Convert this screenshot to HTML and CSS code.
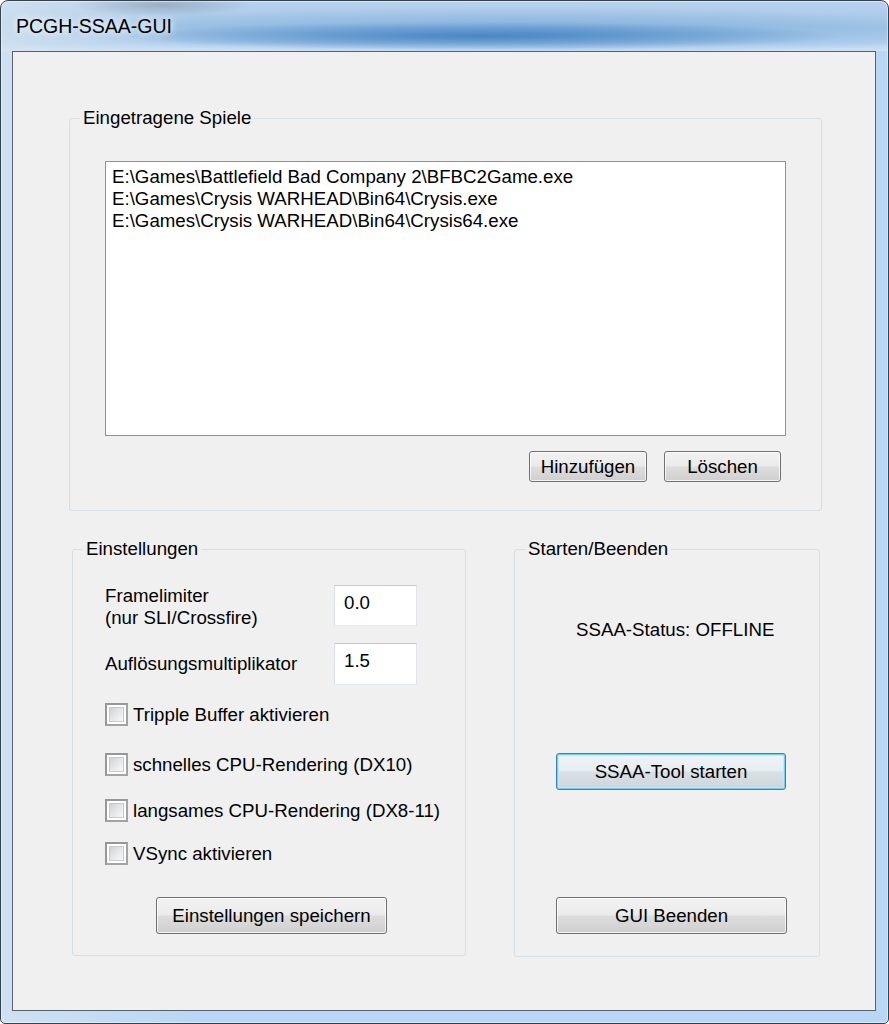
FILE: index.html
```html
<!DOCTYPE html>
<html lang="de">
<head>
<meta charset="utf-8">
<title>PCGH-SSAA-GUI</title>
<link rel="stylesheet" href="styles.css">
</head>
<body>
<div class="window">
  <div class="titlebar"><span class="title">PCGH-SSAA-GUI</span></div>
  <div class="client">
    <fieldset class="group games">
      <legend>Eingetragene Spiele</legend>
      <div class="games-body">
        <div class="listbox">
          <div class="item">E:\Games\Battlefield Bad Company 2\BFBC2Game.exe</div>
          <div class="item">E:\Games\Crysis WARHEAD\Bin64\Crysis.exe</div>
          <div class="item">E:\Games\Crysis WARHEAD\Bin64\Crysis64.exe</div>
        </div>
        <div class="btn-row">
          <button class="btn btn-add">Hinzufügen</button>
          <button class="btn btn-del">Löschen</button>
        </div>
      </div>
    </fieldset>

    <div class="lower">
      <fieldset class="group settings">
        <legend>Einstellungen</legend>
        <div class="settings-body">
          <div class="field-row row-frame">
            <div class="field-label">Framelimiter<br>(nur SLI/Crossfire)</div>
            <div class="textbox tb-frame">0.0</div>
          </div>
          <div class="field-row row-mult">
            <div class="field-label">Auflösungsmultiplikator</div>
            <div class="textbox tb-mult">1.5</div>
          </div>
          <div class="check cb1"><span class="check-box"></span><span class="check-text">Tripple Buffer aktivieren</span></div>
          <div class="check cb2"><span class="check-box"></span><span class="check-text">schnelles CPU-Rendering (DX10)</span></div>
          <div class="check cb3"><span class="check-box"></span><span class="check-text">langsames CPU-Rendering (DX8-11)</span></div>
          <div class="check cb4"><span class="check-box"></span><span class="check-text">VSync aktivieren</span></div>
          <button class="btn btn-save">Einstellungen speichern</button>
        </div>
      </fieldset>

      <fieldset class="group control">
        <legend>Starten/Beenden</legend>
        <div class="control-body">
          <div class="status">SSAA-Status: OFFLINE</div>
          <button class="btn btn-default btn-start">SSAA-Tool starten</button>
          <button class="btn btn-quit">GUI Beenden</button>
        </div>
      </fieldset>
    </div>
  </div>
</div>
</body>
</html>
```

FILE: styles.css
```css
html, body {
  margin: 0;
  padding: 0;
  background: #ffffff;
}

body {
  font-family: "Liberation Sans", Arial, sans-serif;
  font-size: 18.7px;
  color: #000;
}

.window {
  width: 889px;
  height: 1024px;
  box-sizing: border-box;
  border: 1px solid #34424f;
  border-radius: 8px 8px 5px 5px;
  padding: 0 12px 12px 11px;
  display: flex;
  flex-direction: column;
  background:
    radial-gradient(ellipse 360px 14px at 480px 35px, rgba(72, 134, 196, 1), rgba(72, 134, 196, 0)),
    radial-gradient(ellipse 460px 24px at 520px 30px, rgba(118, 168, 216, 0.8), rgba(118, 168, 216, 0)),
    radial-gradient(ellipse 90px 11px at 160px 4px, rgba(120, 132, 146, 0.45), rgba(120, 132, 146, 0)),
    linear-gradient(to right, rgba(214, 228, 240, 0.75) 0px, rgba(214, 228, 240, 0) 190px),
    linear-gradient(to bottom, #b8d2ec 0px, #a4c6e7 26px, #b3d0ed 42px, #cfe2f4 50px, #b9d7f4 50px, #b9d7f4 100%);
  box-shadow: inset 0 0 0 1px rgba(255, 255, 255, 0.45);
}

.titlebar {
  height: 50px;
  flex: none;
  padding-left: 4px;
  line-height: 51px;
}

.title {
  font-size: 19.5px;
  color: #000;
  text-shadow: 0 0 6px rgba(255, 255, 255, 0.9), 0 0 10px rgba(255, 255, 255, 0.7);
}

.client {
  flex: 1;
  border: 1px solid #56616d;
  background: #f0f0f0;
  display: flex;
  flex-direction: column;
}

/* group boxes */
.group {
  margin: 0;
  padding: 0;
  min-width: 0;
  border: 1px solid #d5dfe5;
  border-radius: 3px;
  box-sizing: border-box;
}

.group legend {
  margin-left: 10px;
  padding: 0 3px;
  line-height: 22px;
  height: 22px;
}

.games {
  margin: 55px 53px 0 56px;
}

.games-body {
  padding: 32px 35px 28px 35px;
  display: flex;
  flex-direction: column;
}

.listbox {
  height: 275px;
  box-sizing: border-box;
  border: 1px solid #8e9297;
  background: #fff;
  padding: 4px 6px;
}

.item {
  line-height: 22px;
  white-space: nowrap;
}

.btn-row {
  margin-top: 15px;
  display: flex;
  justify-content: flex-end;
  gap: 17px;
  padding-right: 5px;
}

/* buttons */
.btn {
  font: inherit;
  color: #000;
  padding: 0;
  margin: 0;
  box-sizing: border-box;
  border: 1px solid #707070;
  border-radius: 3px;
  background: linear-gradient(to bottom, #f2f2f2 0%, #ebebeb 48%, #dddddd 52%, #cfcfcf 100%);
  box-shadow: inset 0 0 0 1px rgba(255, 255, 255, 0.75);
  display: flex;
  align-items: center;
  justify-content: center;
}

.btn-add {
  width: 118px;
  height: 31px;
}

.btn-del {
  width: 117px;
  height: 31px;
}

.btn-default {
  border-color: #3c7fb1;
  background: linear-gradient(to bottom, #eef4f8 0%, #e6ecf0 48%, #d9e0e5 52%, #cdd5db 100%);
  box-shadow: inset 0 0 0 1px #6fd0f6, inset 0 0 0 2px rgba(180, 235, 252, 0.8);
}

/* lower row */
.lower {
  margin-top: 27px;
  padding-left: 59px;
  display: flex;
  gap: 48px;
}

.settings {
  width: 394px;
  height: 418px;
}

.control {
  width: 306px;
  height: 419px;
}

.settings-body {
  padding: 25px 0 0 32px;
  display: flex;
  flex-direction: column;
  align-items: flex-start;
}

.field-row {
  display: flex;
}

.field-label {
  width: 229px;
  line-height: 22px;
}

.row-frame {
  align-items: flex-start;
  height: 41px;
}

.row-mult {
  margin-top: 17px;
  align-items: center;
}

.textbox {
  width: 83px;
  box-sizing: border-box;
  border: 1px solid;
  border-color: #c4c7cc #e2e3ea #e3e9ef #dbdfe6;
  background: #fff;
  padding: 6px 9px;
  line-height: 22px;
}

.tb-frame {
  height: 41px;
}

.tb-mult {
  height: 42px;
}

.check {
  display: flex;
  align-items: center;
  height: 23px;
  gap: 5px;
}

.cb1 { margin-top: 18px; }
.cb2 { margin-top: 27px; }
.cb3 { margin-top: 23px; }
.cb4 { margin-top: 20px; }

.check-box {
  flex: none;
  width: 23px;
  height: 23px;
  box-sizing: border-box;
  border: 2px solid #a3a3a3;
  border-top-color: #979797;
  border-left-color: #979797;
  background: #fff;
  padding: 2px;
}

.check-box::before {
  content: "";
  display: block;
  width: 100%;
  height: 100%;
  box-sizing: border-box;
  border: 1px solid #c6c9cd;
  background: linear-gradient(135deg, #d0d2d5 0%, #e6e7e8 50%, #f8f8f8 100%);
}

.check-text {
  line-height: 22px;
  white-space: nowrap;
}

.btn-save {
  margin-top: 32px;
  margin-left: 51px;
  width: 231px;
  height: 37px;
}

.control-body {
  padding: 0 0 0 41px;
  display: flex;
  flex-direction: column;
  align-items: flex-start;
}

.status {
  margin-top: 59px;
  margin-left: 20px;
  line-height: 22px;
  white-space: nowrap;
}

.btn-start {
  margin-top: 112px;
  width: 230px;
  height: 37px;
}

.btn-quit {
  margin-top: 107px;
  width: 231px;
  height: 37px;
}
```
